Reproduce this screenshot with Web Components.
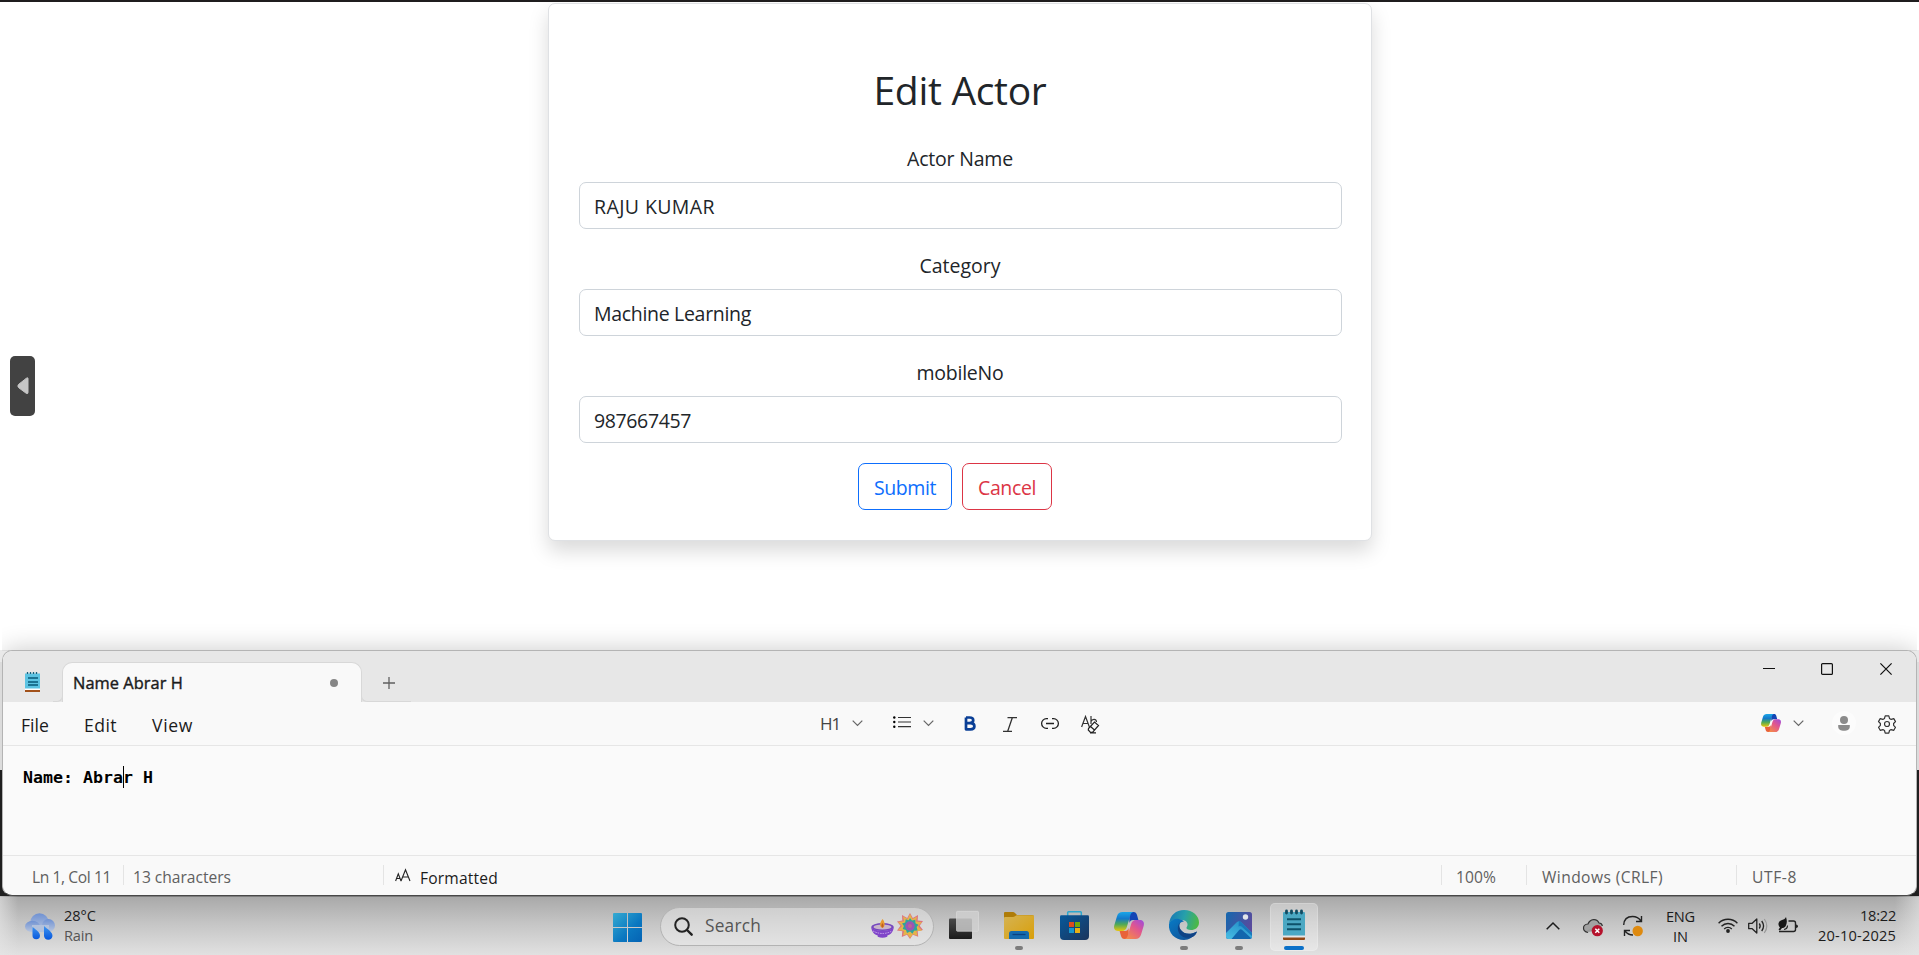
<!DOCTYPE html>
<html lang="en">
<head>
<meta charset="utf-8">
<title>Edit Actor</title>
<style>
html,body{margin:0;height:955px;overflow:hidden;background:#fff;font-family:"Open Sans","Noto Sans",sans-serif;color:#212529}
</style>
</head>
<body>
<desktop-screen></desktop-screen>
<script>
const define = (name, html, after) => {
  const t = document.createElement('template');
  t.innerHTML = html;
  customElements.define(name, class extends HTMLElement {
    connectedCallback() {
      if (this.shadowRoot) return;
      this.attachShadow({mode: 'open'}).append(t.content.cloneNode(true));
      if (after) after(this, this.shadowRoot);
    }
  });
};

/* A text run set to a given size and advance width. */
define('ui-text', `<style>:host{display:block;white-space:pre;flex:none}span{display:inline-block}</style><span><slot></slot></span>`, (el, root) => {
  const w = +el.getAttribute('w'), s = el.getAttribute('s');
  if (s) el.style.fontSize = s + 'px';
  const span = root.querySelector('span');
  if (w) {
    const natural = span.getBoundingClientRect().width, n = el.textContent.length;
    span.style.letterSpacing = ((w - natural) / n) + 'px';
    el.style.width = w + 'px';
  }
});

const copilot = id => `
<defs>
<linearGradient id="a${id}" x1="0" y1="0" x2="0" y2="1"><stop offset="0" stop-color="#1aa6e8"/><stop offset=".35" stop-color="#1479c9"/><stop offset=".65" stop-color="#4fa957"/><stop offset="1" stop-color="#e8c60c"/></linearGradient>
<linearGradient id="b${id}" x1="1" y1="0" x2=".2" y2="1"><stop offset="0" stop-color="#9a4be0"/><stop offset=".45" stop-color="#e0568f"/><stop offset="1" stop-color="#f58a4a"/></linearGradient></defs>
<path d="M15 0h4.500c2 0 2.900 1 3.500 3l1.400 5H19c-2 0-3 1-3.500 3z" fill="#1345b5"/>
<path d="M15 27h-4.500c-2 0-2.900-1-3.500-3l-1.400-5H11c2 0 3-1 3.500-3z" fill="#e8623a"/>
<path d="M8.500 0h11c-2 .3-2.800 2-3.400 4L13 14.500c-.8 2.800-2.200 4.500-5 4.500H4C.8 19-.6 16.500.3 13.300L3 4.200C3.900 1.400 5.700 0 8.500 0z" fill="url(#a${id})"/>
<path d="M21.500 27h-11c2-.3 2.800-2 3.400-4L17 12.500C17.800 9.700 19.200 8 22 8h4c3.200 0 4.600 2.500 3.700 5.700L27 22.800c-.9 2.800-2.700 4.200-5.500 4.200z" fill="url(#b${id})"/>`;

const icons = {
  tri: [14, 18, '<path d="M12 1.500v14q0 1.500-1.500 1L2.800 10.800q-2-1.800 0-3.600L10.500 1.200q1.500-1 1.500.3z" fill="#c6c6c6" stroke="#c6c6c6"/>'],
  notes: [15, 20, '<path d="M0 1.500h15V17H0z" fill="#5cc3e2"/><path d="M2.500 0v2m3-2v2m3-2v2m3-2v2" stroke="#17607c" stroke-width="1.300"/><path d="M3 6h10M3 10h10M3 13h10" stroke="#075a78" stroke-width="1.700"/><path d="M0 16.500h15v1.500H0z" fill="#fff"/><path d="M0 18h15v2H0z" fill="#a2511a"/>'],
  plus: [12, 12, '<path d="M6 0v12M0 6h12" stroke="#606060" stroke-width="1.300"/>'],
  min: [12, 12, '<path d="M0 5.500h12" stroke="#111" stroke-width="1.100"/>'],
  max: [12, 12, '<rect x=".6" y=".6" width="10.800" height="10.800" rx="1" fill="none" stroke="#111" stroke-width="1.200"/>'],
  close: [12, 12, '<path d="M.4.4l11.200 11.200M11.600.4L.4 11.600" stroke="#111" stroke-width="1.200"/>'],
  chev: [11, 7, '<path d="M.7.7l4.800 4.800L10.300.7" fill="none" stroke="#666" stroke-width="1.200"/>'],
  up: [14, 8, '<path d="M.7 7.300L7 1l6.300 6.300" fill="none" stroke="#1c1c1c" stroke-width="1.500"/>'],
  list: [18, 12, '<path d="M5 1.500h13M5 6h13M5 10.700h13" stroke="#333" stroke-width="1.200"/><circle cx="1.300" cy="1.500" r="1.200"/><circle cx="1.300" cy="6" r="1.200"/><circle cx="1.300" cy="10.700" r="1.200"/>'],
  bold: [12, 15, '<path d="M2 1.500h3.500c5 0 5 5.600 0 5.600H2M2 7.100h4.500c5.200 0 5.200 6.200 0 6.200H2V1.500" fill="none" stroke="#0a3f96" stroke-width="2.700" stroke-linejoin="round"/>'],
  italic: [14, 15, '<path d="M4.500.7H14M0 14.300h9M9.300.7l-4.600 13.600" stroke="#333" stroke-width="1.300"/>'],
  link: [18, 11, '<path d="M7 .7H5.400a4.800 4.800 0 000 9.600H7M11 .7h1.600a4.800 4.800 0 010 9.600H11M5 5.500h8" fill="none" stroke="#222" stroke-width="1.300"/>'],
  clear: [19, 19, '<path d="M.6 12L4.500 1.500 8.400 12M2 8.500h5M10 1v8M10 6.500c1-3 5.500-3 5.500.5" fill="none" stroke="#333" stroke-width="1.200"/><path d="M7.500 13.500l6-6.500 4 3.500-6 6.800h-2L7.300 15zM9.500 11.500l4 3.500M9 17.800h6" fill="none" stroke="#222" stroke-width="1.200"/>'],
  copilot: [30, 27, copilot('s')],
  person: [24, 24, '<circle cx="12" cy="12" r="12" fill="#fcfcfc"/><circle cx="12" cy="9" r="4" fill="#8b8b8b"/><path d="M6.200 14h11.600v1.500c0 3-2.500 4.300-5.800 4.300s-5.800-1.300-5.800-4.300z" fill="#8b8b8b"/>'],
  gear: [18, 18, '<path d="M7.200.8h3.600l.7 2.600 1.700 1 2.600-.8 1.700 3-1.900 1.900v1.800l1.900 2-1.700 3-2.700-.7-1.600.9-.7 2.600H7.200l-.7-2.600-1.600-.9-2.700.7-1.700-3 1.900-2V8.500L.5 6.600l1.700-3 2.600.8 1.700-1z" fill="none" stroke="#333" stroke-width="1.200" stroke-linejoin="round"/><circle cx="9" cy="9" r="2.500" fill="none" stroke="#333" stroke-width="1.200"/>'],
  aa: [16, 13, '<path d="M.6 12L3.300 4.800 6 12M1.500 9.500h3.800M6 12L10.500.8 15 12M7.700 8h5.800" fill="none" stroke="#222" stroke-width="1.100"/>'],
  rain: [30, 27, '<defs><linearGradient id="r1" x1="0" y1="0" x2="0" y2="1"><stop offset="0" stop-color="#6f91d2"/><stop offset="1" stop-color="#b9c6de"/></linearGradient><linearGradient id="r2" x1="0" y1="0" x2="0" y2="1"><stop offset="0" stop-color="#3f95ef"/><stop offset="1" stop-color="#0757dd"/></linearGradient></defs><circle cx="14.500" cy="9.500" r="9.300" fill="url(#r1)"/><circle cx="23.500" cy="12.500" r="6.500" fill="url(#r1)"/><ellipse cx="7.500" cy="13.500" rx="7.500" ry="5.800" fill="url(#r1)"/><path d="M7 12h17v7H7z" fill="#b2c1dc"/><path d="M7.500 14c4 3 7.500 5.500 7.500 8.500a3.600 3.600 0 01-7.500 0zM19 13c4.500 4 8.500 6 8.500 10a4.300 4.300 0 01-8.500 0z" fill="url(#r2)"/>'],
  start: [29, 29, '<defs><linearGradient id="st" x1="0" y1="0" x2="29" y2="29" gradientUnits="userSpaceOnUse"><stop offset="0" stop-color="#35abd2"/><stop offset=".6" stop-color="#0a77c0"/><stop offset="1" stop-color="#0563b4"/></linearGradient></defs><path d="M0 1q0-1 1-1h13v14H0zM15 0h13q1 0 1 1v13H15zM0 15h14v14H1q-1 0-1-1zM15 15h14v13q0 1-1 1H15z" fill="url(#st)"/>'],
  search: [19, 19, '<circle cx="8" cy="8" r="6.800" fill="none" stroke="#222" stroke-width="2"/><path d="M13 13l4.700 4.700" stroke="#222" stroke-width="2.400" stroke-linecap="round"/>'],
  diya: [23, 19, '<ellipse cx="11.500" cy="8" rx="11.300" ry="4" fill="#7548bd"/><path d="M.2 8c.5 5 3 7.500 6.500 8.500v1.200q4.800 2 9.600 0v-1.200c3.500-1 6-3.500 6.500-8.500-4 5-18.600 5-22.600 0z" fill="#8045c9"/><ellipse cx="11.500" cy="8" rx="9" ry="2.600" fill="#c9b5c9"/><path d="M2 12q9.500 5 19 0" fill="none" stroke="#c9a9ec" stroke-dasharray="1.500 1"/><path d="M11.500 0c3 3.500 2.600 8 0 9-3-1-3.500-4.500 0-9z" fill="#e89a2d"/><path d="M11.500 4c1.600 2 1.200 4 0 4.700-1.500-.7-1.600-2.700 0-4.700z" fill="#bf5c24"/>'],
  flower: [26, 26, '<path d="M13 0l2.800 5L21 2l-.3 5.600 5.300.4-3.300 4.800L26 17l-5.300 1.200.5 5.500-5.400-2L13 26l-3-4.300-5.200 2.300.5-5.700L0 17.500l3.500-4.700L0 8.500l5.300-1L5 2l5.200 3z" fill="#dc7181"/><path d="M13 1l2.500 5 4.500-2.500-1 5 6 .7-4 3.800 4 4.500-5.500.7 1 4.500-4.500-1.500L13 25l-2.500-3.800L6 22.500l1-4.500-6-1L5 13 1 9l6-.7-1-5 4.500 2.700z" fill="#e4b44a"/><path d="M13 5l2 2.500 3.300-.7.2 3.400 3 1.500L19.700 14l.8 3.400-3.400.4-1.600 3-2.500-2.200-3 1.500-1-3.200-3.300-.8 1.200-3.100L5 10.500l3.200-.9.500-3.300 3 1z" fill="#2fa39d"/><circle cx="13" cy="13" r="4.700" fill="#9c55b4"/><circle cx="13" cy="13" r="2" fill="#be6094"/>'],
  task: [30, 28, '<defs><linearGradient id="tv" x1="0" y1="0" x2="0" y2="1"><stop offset="0" stop-color="#4a4a4a"/><stop offset="1" stop-color="#1c1c1c"/></linearGradient></defs><rect y="7.500" width="23" height="20.500" rx="1" fill="url(#tv)"/><rect x="7.500" y=".3" width="22" height="20" rx="1" fill="#cfcfcf" fill-opacity=".82" stroke="#ddd" stroke-opacity=".6"/>'],
  folder: [30, 27, '<defs><linearGradient id="fo" x1="0" y1="0" x2="1" y2="1"><stop offset="0" stop-color="#d5b353"/><stop offset="1" stop-color="#d99f0a"/></linearGradient></defs><path d="M0 1q0-1 1-1h8q1 0 2 1l2 2h15q2 0 2 2v5H0z" fill="#af7c08"/><path d="M0 6q0-1 1-1h8q1 0 2-.7l1.500-1H29q1 0 1 1V26q0 1-1 1H1q-1 0-1-1z" fill="url(#fo)"/><path d="M5 27v-5.500q0-2.500 2.500-2.500h15q2.500 0 2.500 2.500V27z" fill="#156bae"/><path d="M8.500 22.500h13" stroke="#0b4180" stroke-width="1.300"/>'],
  store: [29, 29, '<defs><linearGradient id="so" x1="0" y1="0" x2="1" y2="1"><stop offset="0" stop-color="#07599b"/><stop offset="1" stop-color="#1b345c"/></linearGradient></defs><path d="M7.700 6V1.500q0-.8.8-.8h12q.8 0 .8.800V6" fill="none" stroke="#2ba7cf" stroke-width="1.500"/><path d="M0 5.500q0-1.300 1.300-1.300h26.400q1.300 0 1.300 1.300V25q0 4-4 4H4q-4 0-4-4z" fill="url(#so)"/><path d="M9 11h5v5H9z" fill="#dc4c1e"/><path d="M15 11h5v5h-5z" fill="#72a909"/><path d="M9 17h5v5H9z" fill="#1597cf"/><path d="M15 17h5v5h-5z" fill="#e9b014"/>'],
  copilotbig: [30, 27, copilot('b')],
  edge: [30, 30, '<defs><linearGradient id="e1" x1="0" y1=".3" x2="1" y2=".5"><stop offset="0" stop-color="#1779b5"/><stop offset=".5" stop-color="#27a0aa"/><stop offset="1" stop-color="#4cb944"/></linearGradient><linearGradient id="e2" x1="0" y1="0" x2="1" y2="1"><stop offset="0" stop-color="#087bc5"/><stop offset="1" stop-color="#124b91"/></linearGradient></defs><path d="M0 14C1 5 7 0 15 0c9 0 15 6 15 12.500 0 5-4 7.500-8 7.500-3 0-5-1-4.500-2.500 2.500-3 .5-7.500-4.500-7.500C7 8 2 10 0 14z" fill="url(#e1)"/><path d="M0 14c1.500-4 6-6 10-5 3 .6 4.500 2 5 3-4-1-6 4-3.500 7.500 3 4.500 9 6 16.500 2C25 27 20 30 15 30 6 30-1 23 0 14z" fill="url(#e2)"/><path d="M11 12.500C8 15.500 8 21 11.500 25c4 4 9.500 3 13 1.500 1.500-1 3-3 3.500-5-7 4-13.500 2.500-16.500-2-1.500-2.500-1.700-5-.5-7z" fill="#0f4386"/>'],
  photos: [26, 27, '<defs><linearGradient id="p1" x1="0" y1="0" x2="1" y2=".4"><stop offset="0" stop-color="#1468ae"/><stop offset="1" stop-color="#594b9d"/></linearGradient><linearGradient id="p2" x1="0" y1="1" x2=".6" y2="0"><stop offset="0" stop-color="#48bde4"/><stop offset="1" stop-color="#2590c8"/></linearGradient></defs><rect width="26" height="27" rx="2.500" fill="url(#p1)"/><path d="M0 21L11 10q2-1.700 4 0l11 11v3.500q0 2.500-2.500 2.500h-21Q0 27 0 24.500z" fill="url(#p2)"/><path d="M5.500 27l7.700-9q1.500-1.500 3 0l8.800 8q-.5 1-1.500 1z" fill="#1266ad"/><path d="M13 9q1 0 2 1l11 11v3l-10.500-9.500q-1.500-1-3 0z" fill="#1979bd"/><circle cx="19.500" cy="5" r="2.700" fill="#e1e4ea"/>'],
  notesbig: [22, 30, '<path d="M0 3q0-1 1-1h20q1 0 1 1v23H0z" fill="#4ba8c3"/><path d="M0 25.500h22V28H0z" fill="#e6e6e6"/><path d="M0 27.500h22V29q0 1-1 1H1q-1 0-1-1z" fill="#914714"/><path d="M3.500 1v2M8.500 1v2M13.500 1v2M18.500 1v2" stroke="#124b62" stroke-width="2.800" stroke-linecap="round"/><path d="M4 9.200h14M4 14.200h14M4 19.200h14" stroke="#0e516a" stroke-width="1.900"/>'],
  cloud: [20, 19, '<path d="M5 14.500c-6-1-6-8 0-8.500C7 .5 14 0 16 5c2 0 3 1 3.400 3" fill="#a2a2a2" stroke="#333" stroke-width="1.200"/><path d="M3 13L17 6l-3 8z" fill="#999"/><circle cx="14.300" cy="12.700" r="5.600" fill="#b5122c"/><path d="M12.300 10.700l4 4m0-4l-4 4" stroke="#fff" stroke-width="1.500"/>'],
  sync: [20, 22, '<path d="M.7 10C1 4 5 1.500 9.500 1.500c3.500 0 6.500 1.500 8.500 4.500M18.500 1v5.500H13M10 20c-3.500 0-6-1.300-8-4M1.500 21v-5.500H7" fill="none" stroke="#222" stroke-width="1.400"/><circle cx="14.700" cy="16" r="5.200" fill="#de8a10"/>'],
  wifi: [20, 15, '<g fill="none" stroke="#222" stroke-width="1.400"><path d="M.6 5.200c5.200-5.300 13.600-5.300 18.800 0M3.500 8.200c3.600-3.700 9.400-3.700 13 0M6.200 11c2.100-2.200 5.500-2.200 7.600 0"/></g><circle cx="10" cy="13" r="1.900" fill="#222"/>'],
  vol: [20, 16, '<path d="M.7 5.300h3.500L8.800 1v14l-4.600-4.300H.7z" fill="none" stroke="#222" stroke-width="1.300" stroke-linejoin="round"/><path d="M11.300 5.500q1.800 2.500 0 5M13.700 3q3.700 5 0 10" fill="none" stroke="#222" stroke-width="1.300"/><path d="M16.300 1q5 7 0 14" fill="none" stroke="#999" stroke-width="1.200"/>'],
  batt: [20, 17, '<path d="M10.500 4h5q2 0 2 2v6.500q0 2-2 2H1" fill="none" stroke="#222" stroke-width="1.400"/><path d="M18 7.500q2 0 2 1.700t-2 1.700z" fill="#222"/><path d="M8 0C9.300 4 9 6.500 7.700 9c-.8 1.500-2.200 2-3.700 2L2 13.500.5 12.500 2 10.500C-.5 8 0 4 4 3 6 2.500 7.300 1.500 8 0z" fill="#171717"/><path d="M9.500 8.500Q9.500 12 6 12.500" fill="none" stroke="#222" stroke-width="1.200"/>']
};
customElements.define('ui-icon', class extends HTMLElement {
  connectedCallback() {
    if (this.shadowRoot) return;
    const [w, h, body] = icons[this.getAttribute('n')];
    const W = this.getAttribute('w') || w, H = this.getAttribute('h') || h;
    this.attachShadow({mode: 'open'}).innerHTML = `<style>:host{display:block;flex:none;width:${W}px;height:${H}px}svg{display:block;overflow:visible}</style><svg width="${W}" height="${H}" viewBox="0 0 ${w} ${h}" preserveAspectRatio="none">${body}</svg>`;
  }
});

define('form-field', `<style>
:host{display:flex;flex-direction:column;align-items:stretch;font-size:19.5px}
.l{height:30px;line-height:30px;margin-bottom:8px;display:flex;justify-content:center}
.i{box-sizing:border-box;height:47px;border:1px solid #ced4da;border-radius:7px;padding:1px 14.5px 0;line-height:45px;background:#fff}
</style><div class="l"><slot name="label"></slot></div><div class="i"><slot></slot></div>`);

define('outline-button', `<style>
:host{display:flex;box-sizing:border-box;height:47px;border:1px solid currentColor;border-radius:7px;padding:1px 15px 0;line-height:46px;font-size:19.5px;margin-right:10px}
</style><slot></slot>`);

define('actor-card', `<style>
:host{display:block;box-sizing:border-box;width:824px;height:538px;margin:1px 0 0 548px;border:1px solid #dfe1e4;border-radius:7px;background:#fff;box-shadow:0 10px 20px rgba(0,0,0,.15);padding:60px 29.5px 0}
h2{margin:0 0 28px;font-weight:400;height:52px;line-height:52px;font-size:39px;display:flex;justify-content:center}
form-field{margin-bottom:22px}
form-field.last{margin-bottom:20px}
.b{display:flex;justify-content:center}
</style>
<h2><ui-text w="173">Edit Actor</ui-text></h2>
<form-field><ui-text slot="label" w="106">Actor Name</ui-text><ui-text w="121">RAJU KUMAR</ui-text></form-field>
<form-field><ui-text slot="label" w="81">Category</ui-text><ui-text w="157">Machine Learning</ui-text></form-field>
<form-field class="last"><ui-text slot="label" w="87">mobileNo</ui-text><ui-text w="97">987667457</ui-text></form-field>
<div class="b"><outline-button style="color:#0d6efd"><ui-text w="62">Submit</ui-text></outline-button><outline-button style="color:#dc3545"><ui-text w="58">Cancel</ui-text></outline-button></div>`);

define('web-page', `<style>
:host{display:block;position:relative;height:650px;box-sizing:border-box;border-top:2px solid #1f1d1e}
.h{position:absolute;left:10px;top:354px;width:25px;height:60px;border-radius:5px;background:#424242;display:flex;align-items:center;padding-left:6px;box-sizing:border-box}
</style><actor-card></actor-card><div class="h"><ui-icon n="tri"></ui-icon></div>`);

define('title-bar', `<style>
:host{display:flex;height:51px;background:#e7e7e7;align-items:flex-start;border-radius:9px 9px 0 0}
.tab{box-sizing:border-box;position:relative;width:300px;height:40px;margin:11px 0 0 22px;background:#f9f9f9;border:1px solid #d8d8d8;border-bottom:0;border-radius:10px 10px 0 0;display:flex;align-items:center;padding-left:10px;color:#1b1b1b;-webkit-text-stroke:.4px}
.dot{width:8px;height:8px;border-radius:50%;background:#868686;margin-left:147px}
.tab:before,.tab:after{content:"";position:absolute;bottom:0;height:6px;box-sizing:border-box;border-bottom:1px solid #d8d8d8}
.tab:before{left:-10px;width:10px;border-right:1px solid #d8d8d8;border-bottom-right-radius:6px;background:#e7e7e7}
.tab:after{right:-50px;width:50px;border-left:1px solid #d8d8d8;border-bottom-left-radius:6px;background:#e7e7e7}
</style><ui-icon n="notes" style="margin:21px 0 0 22px"></ui-icon>
<div class="tab"><ui-text w="110" s="16.4">Name Abrar H</ui-text><div class="dot"></div></div>
<ui-icon n="plus" style="margin:26px 0 0 21px"></ui-icon>
<ui-icon n="min" style="margin:12px 0 0 1368px"></ui-icon><ui-icon n="max" style="margin:12px 0 0 46px"></ui-icon><ui-icon n="close" style="margin:12px 0 0 47px"></ui-icon>`);

define('menu-bar', `<style>
:host{display:flex;height:43px;background:#f9f9f9;align-items:center;border-bottom:1px solid #e6e6e6;color:#1b1b1b}
.m{padding-top:2px}
</style>
<ui-text class="m" w="28" s="17.6" style="margin-left:18px">File</ui-text><ui-text class="m" w="33" s="17.6" style="margin-left:35px">Edit</ui-text><ui-text class="m" w="41" s="17.6" style="margin-left:35px">View</ui-text>
<ui-text w="20" s="17" style="margin-left:627px;color:#444">H1</ui-text><ui-icon n="chev" style="margin-left:12px;margin-top:-1px"></ui-icon>
<ui-icon n="list" style="margin-left:30px;margin-top:-3px"></ui-icon><ui-icon n="chev" style="margin-left:12px;margin-top:-1px"></ui-icon>
<ui-icon n="bold" style="margin-left:30px"></ui-icon><ui-icon n="italic" style="margin-left:27px;margin-top:1px"></ui-icon>
<ui-icon n="link" style="margin-left:24px"></ui-icon><ui-icon n="clear" style="margin-left:22px;margin-top:1px"></ui-icon>
<ui-icon n="copilot" w="20" h="18" style="margin-left:661px;margin-top:-1px"></ui-icon><ui-icon n="chev" style="margin-left:12px;margin-top:-1px"></ui-icon>
<ui-icon n="person" style="margin-left:28px;margin-top:-1px"></ui-icon><ui-icon n="gear" style="margin-left:22px;margin-top:1px"></ui-icon>`);

define('text-editor', `<style>
:host{display:block;height:109px;background:#fafafa;box-sizing:border-box;padding:20px 0 0 20px;color:#000;font:bold 16.600px/24px "DejaVu Sans Mono",monospace;position:relative}
i{position:absolute;left:120px;top:20px;width:1px;height:22px;background:#000}
</style><ui-text w="130">Name: Abrar H</ui-text><i></i>`);

define('status-bar', `<style>
:host{display:flex;height:38px;background:#f9f9f9;border-top:1px solid #e6e6e6;border-radius:0 0 9px 9px;align-items:center;color:#606060;font-size:15.6px}
b{width:1px;height:20px;background:#e4e4e4;flex:none}
ui-text{padding-top:4px}
</style>
<ui-text w="79" style="margin-left:29px">Ln 1, Col 11</ui-text><b style="margin-left:12px"></b><ui-text w="98" style="margin-left:9px">13 characters</ui-text>
<b style="margin-left:152px"></b><ui-icon n="aa" style="margin-left:11px"></ui-icon><ui-text w="78" style="margin-left:9px;color:#1b1b1b;padding-top:5px">Formatted</ui-text>
<b style="margin-left:943px"></b><ui-text w="40" style="margin-left:14px">100%</ui-text><b style="margin-left:30px"></b><ui-text w="121" style="margin-left:15px">Windows (CRLF)</ui-text><b style="margin-left:73px"></b><ui-text w="45" style="margin-left:15px">UTF-8</ui-text>`);

define('note-window', `<style>
:host{display:block;height:246px;background:linear-gradient(#dcdcdc 120px,#1f1f1f 120px);position:relative}
.w{position:relative;box-sizing:border-box;height:246px;margin:0 2px;border:1px solid #b4b4b4;border-bottom:1px solid #484848;border-radius:10px;overflow:hidden;background:#f9f9f9}
.s{position:absolute;left:2px;right:2px;top:0;height:120px;border-radius:10px 10px 0 0;box-shadow:0 -1px 26px rgba(0,0,0,.2);clip-path:inset(-50px 0 119px 0)}
.c{position:absolute;top:0;width:8px;height:12px;background:#e9e9e9}
</style><div class="c" style="left:0"></div><div class="c" style="right:0"></div><div class="s"></div><div class="w"><title-bar></title-bar><menu-bar></menu-bar><text-editor></text-editor><status-bar></status-bar></div>`);

define('task-app', `<style>
:host{display:flex;flex-direction:column;align-items:center;width:48px;height:48px;box-sizing:border-box;border:1px solid transparent;border-radius:5px;position:relative;flex:none;margin-right:7px}
:host([active]){background:rgba(255,255,255,.3);border-color:rgba(255,255,255,.18)}
.i{height:45px;display:flex;align-items:center;margin-top:-1px}
i{position:absolute;bottom:0;width:8px;height:4px;border-radius:2px;background:#7c7c7c;display:none}
:host([open]) i{display:block}:host([active]) i{width:20px;background:#0a70c8}
</style><div class="i"><slot></slot></div><i></i>`);

define('task-bar', `<style>
:host{display:flex;height:59px;box-sizing:border-box;align-items:center;color:#1b1b1b;font-size:14.600px;line-height:20px;background:linear-gradient(90deg,rgba(230,230,230,.6),rgba(230,230,230,0) 18px,rgba(230,230,230,0) 1895px,rgba(230,230,230,.6)),linear-gradient(#7d7d7d 0,#7d7d7d 1px,#a9a9a9 1px,#c4c4c4 45%,#e1e1e1)}
.two{display:flex;flex-direction:column;margin-top:-2px}
.search{box-sizing:border-box;width:274px;height:39px;border:1px solid #b3b3b3;border-radius:20px;background:rgba(240,240,240,.45);margin:1px 0 0 18px;display:flex;align-items:center;padding-left:13px}
.apps{display:flex;margin:2px 0 0 6px}
.tray{display:flex;align-items:center}
</style>
<ui-icon n="rain" style="margin-left:25px;margin-top:2px"></ui-icon>
<div class="two" style="margin-left:9px;width:60px"><ui-text w="32">28°C</ui-text><ui-text w="29" style="color:#555">Rain</ui-text></div>
<ui-icon n="start" style="margin-left:489px;margin-top:3px"></ui-icon>
<div class="search"><ui-icon n="search"></ui-icon><ui-text w="56" s="17.300" style="margin-left:12px;color:#555">Search</ui-text><ui-icon n="diya" style="margin-left:110px;margin-top:4px"></ui-icon><ui-icon n="flower" style="margin-left:3px"></ui-icon></div>
<div class="apps">
<task-app><ui-icon n="task"></ui-icon></task-app><task-app open><ui-icon n="folder"></ui-icon></task-app><task-app><ui-icon n="store"></ui-icon></task-app><task-app><ui-icon n="copilotbig"></ui-icon></task-app><task-app open><ui-icon n="edge"></ui-icon></task-app><task-app open><ui-icon n="photos"></ui-icon></task-app><task-app open active><ui-icon n="notesbig"></ui-icon></task-app></div>
<div class="tray">
<ui-icon n="up" style="margin-left:221px"></ui-icon><ui-icon n="cloud" style="margin-left:23px;margin-top:3px"></ui-icon><ui-icon n="sync" style="margin-left:20px;margin-top:1px"></ui-icon>
<div class="two" style="margin-left:23px;align-items:center;margin-top:0"><ui-text w="29">ENG</ui-text><ui-text w="15">IN</ui-text></div>
<ui-icon n="wifi" style="margin-left:23px"></ui-icon><ui-icon n="vol" style="margin-left:10px;margin-top:1px"></ui-icon><ui-icon n="batt" style="margin-left:10px;margin-top:-1px"></ui-icon>
<div class="two" style="margin-left:20px;align-items:flex-end"><ui-text w="36">18:22</ui-text><ui-text w="78">20-10-2025</ui-text></div></div>`);

define('desktop-screen', `<style>:host{display:flex;flex-direction:column;width:1919px;height:955px;overflow:hidden}
web-page,note-window,task-bar{flex:none}task-bar{position:relative}</style><web-page></web-page><note-window></note-window><task-bar></task-bar>`);
</script>
</body>
</html>
